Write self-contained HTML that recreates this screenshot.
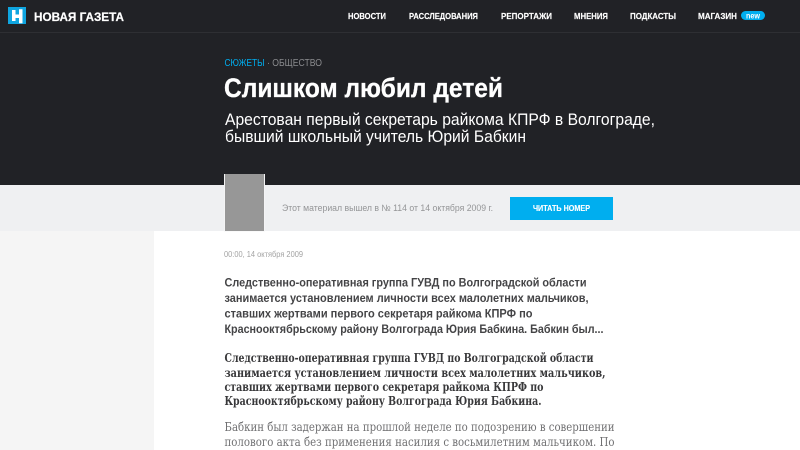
<!DOCTYPE html>
<html lang="ru">
<head>
<meta charset="utf-8">
<title>Слишком любил детей</title>
<style>
html,body{margin:0;padding:0;width:800px;height:450px;overflow:hidden;background:#fff}
svg{display:block}
text{font-family:"Liberation Sans",sans-serif;white-space:pre}
.n{font-size:8.500px;font-weight:700;fill:#fff;stroke:#fff;stroke-width:.15}
.l{font-size:12.300px;font-weight:700;fill:#444446}
.b{font-family:"DejaVu Serif",serif;font-size:11.700px;font-weight:700;fill:#38383a}
.p{font-family:"DejaVu Serif",serif;font-size:11.700px;fill:#707072}
</style>
</head>
<body>
<svg width="800" height="450" viewBox="0 0 800 450" xmlns="http://www.w3.org/2000/svg">
<rect width="800" height="450" fill="#fff"/>
<rect y="231" width="154" height="219" fill="#f5f5f5"/>
<rect width="800" height="185" fill="#212226"/>
<rect y="32" width="800" height="1" fill="#2e2f33"/>
<rect y="185" width="800" height="46" fill="#eff0f2"/>

<rect x="8" y="7" width="18" height="17" fill="#0fa5e0"/>
<path d="M12 10H15.500V14.500H19V9.300H22.500V23.300H19V18H15.500V21H12Z" fill="#fff"/>
<text x="34" y="21" font-size="12" font-weight="700" fill="#fff" stroke="#fff" stroke-width=".2" textLength="90" lengthAdjust="spacingAndGlyphs">НОВАЯ ГАЗЕТА</text>

<text class="n" x="348" y="19" textLength="38" lengthAdjust="spacingAndGlyphs">НОВОСТИ</text>
<text class="n" x="409" y="19" textLength="69" lengthAdjust="spacingAndGlyphs">РАССЛЕДОВАНИЯ</text>
<text class="n" x="501" y="19" textLength="51" lengthAdjust="spacingAndGlyphs">РЕПОРТАЖИ</text>
<text class="n" x="574" y="19" textLength="34" lengthAdjust="spacingAndGlyphs">МНЕНИЯ</text>
<text class="n" x="630" y="19" textLength="46" lengthAdjust="spacingAndGlyphs">ПОДКАСТЫ</text>
<text class="n" x="698" y="19" textLength="39" lengthAdjust="spacingAndGlyphs">МАГАЗИН</text>
<rect x="741" y="11" width="24" height="9" rx="4.500" fill="#00aeef"/>
<text x="746" y="18.500" font-size="8" font-weight="700" fill="#fff" textLength="14" lengthAdjust="spacingAndGlyphs">new</text>

<text x="224.500" y="66" font-size="10.500" fill="#00aeef" textLength="40" lengthAdjust="spacingAndGlyphs">СЮЖЕТЫ</text>
<text x="267" y="66" font-size="10.500" fill="#8a8b8e" textLength="55" lengthAdjust="spacingAndGlyphs">· ОБЩЕСТВО</text>

<text x="224" y="97" font-size="26.500" font-weight="700" fill="#fff" stroke="#fff" stroke-width=".3" textLength="279" lengthAdjust="spacingAndGlyphs">Слишком любил детей</text>
<text x="225" y="125" font-size="16.500" fill="#fff" textLength="430" lengthAdjust="spacingAndGlyphs">Арестован первый секретарь райкома КПРФ в Волгограде,</text>
<text x="225" y="142" font-size="16.500" fill="#fff" textLength="301" lengthAdjust="spacingAndGlyphs">бывший школьный учитель Юрий Бабкин</text>

<rect x="224" y="174" width="41" height="57.500" fill="#f4f4f5"/>
<rect x="225" y="174" width="39" height="57" fill="#979797"/>
<text x="282" y="211" font-size="9" fill="#949597" textLength="211" lengthAdjust="spacingAndGlyphs">Этот материал вышел в № 114 от 14 октября 2009 г.</text>
<rect x="510" y="197" width="103" height="23" fill="#00aeef"/>
<text x="533" y="211" font-size="8" font-weight="700" fill="#fff" stroke="#fff" stroke-width=".12" textLength="57" lengthAdjust="spacingAndGlyphs">ЧИТАТЬ НОМЕР</text>

<text x="224" y="257" font-size="8.500" fill="#a3a3a3" textLength="79" lengthAdjust="spacingAndGlyphs">00:00, 14 октября 2009</text>

<text class="l" x="224.500" y="286.500" textLength="362" lengthAdjust="spacingAndGlyphs">Следственно-оперативная группа ГУВД по Волгоградской области</text>
<text class="l" x="224.500" y="302" textLength="364" lengthAdjust="spacingAndGlyphs">занимается установлением личности всех малолетних мальчиков,</text>
<text class="l" x="224.500" y="317.500" textLength="308" lengthAdjust="spacingAndGlyphs">ставших жертвами первого секретаря райкома КПРФ по</text>
<text class="l" x="224.500" y="333" textLength="379" lengthAdjust="spacingAndGlyphs">Краснооктябрьскому району Волгограда Юрия Бабкина. Бабкин был...</text>

<text class="b" x="224.500" y="362" textLength="369" lengthAdjust="spacingAndGlyphs">Следственно-оперативная группа ГУВД по Волгоградской области</text>
<text class="b" x="224.500" y="377" textLength="381" lengthAdjust="spacingAndGlyphs">занимается установлением личности всех малолетних мальчиков,</text>
<text class="b" x="224.500" y="391" textLength="319" lengthAdjust="spacingAndGlyphs">ставших жертвами первого секретаря райкома КПРФ по</text>
<text class="b" x="224.500" y="405" textLength="317" lengthAdjust="spacingAndGlyphs">Краснооктябрьскому району Волгограда Юрия Бабкина.</text>

<text class="p" x="224.500" y="431" textLength="390" lengthAdjust="spacingAndGlyphs">Бабкин был задержан на прошлой неделе по подозрению в совершении</text>
<text class="p" x="224.500" y="446" textLength="390" lengthAdjust="spacingAndGlyphs">полового акта без применения насилия с восьмилетним мальчиком. По</text>
</svg>
</body>
</html>
